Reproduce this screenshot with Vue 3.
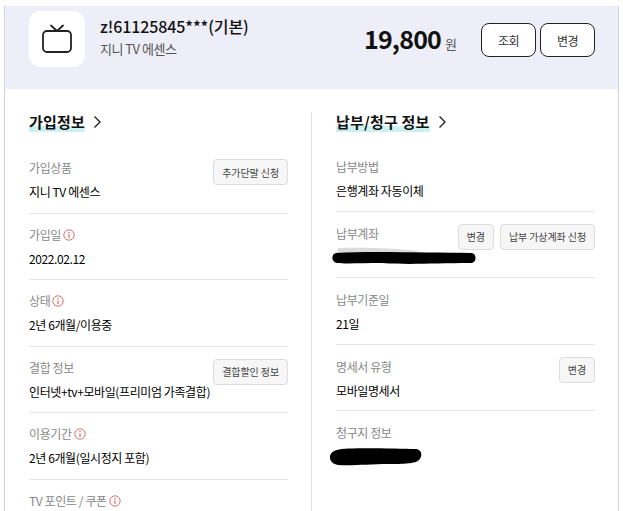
<script setup>
const joinRows = [
  { label: '가입상품', value: '지니 TV 에센스', buttons: ['추가단말 신청'] },
  { label: '가입일', info: true, value: '2022.02.12' },
  { label: '상태', info: true, value: '2년 6개월/이용중' },
  { label: '결합 정보', value: '인터넷+tv+모바일(프리미엄 가족결합)', buttons: ['결합할인 정보'] },
  { label: '이용기간', info: true, value: '2년 6개월(일시정지 포함)' },
  { label: 'TV 포인트 / 쿠폰', info: true, value: '' }
]

const payRows = [
  { label: '납부방법', value: '은행계좌 자동이체' },
  { label: '납부계좌', blob: 'account', buttons: ['변경', '납부 가상계좌 신청'] },
  { label: '납부기준일', value: '21일' },
  { label: '명세서 유형', value: '모바일명세서', buttons: ['변경'] },
  { label: '청구지 정보', blob: 'address' }
]
</script>

<template>
  <div class="page">
    <div class="card">
      <!-- 상단 요약 -->
      <header class="summary">
        <div class="icon-box">
          <svg width="32" height="30" viewBox="0 0 32 30" fill="none" stroke="#222" stroke-width="1.800" stroke-linecap="round" stroke-linejoin="round">
            <rect x="2" y="7" width="28" height="21" rx="4" />
            <path d="M10 1.500l6 5.500 6-5.500" />
          </svg>
        </div>
        <div class="summary-text">
          <div class="line-id">z!61125845***(기본)</div>
          <div class="line-name">지니 TV 에센스</div>
        </div>
        <div class="price"><strong>19,800</strong><span>원</span></div>
        <div class="summary-buttons">
          <button class="btn-round">조회</button>
          <button class="btn-round">변경</button>
        </div>
      </header>

      <div class="columns">
        <!-- 가입정보 -->
        <section class="col col-left">
          <h2 class="col-title">
            <span>가입정보</span>
            <svg width="9" height="14" viewBox="0 0 9 14" fill="none" stroke="#222" stroke-width="1.4"><path d="M1.5 1.5L7 7l-5.500 5.500" /></svg>
          </h2>
          <div v-for="row in joinRows" :key="row.label" class="row">
            <div class="row-text">
              <div class="label">
                {{ row.label }}
                <svg v-if="row.info" class="info" width="12" height="12" viewBox="0 0 12 12" fill="none" stroke="#e0706c">
                  <circle cx="6" cy="6" r="5.200" />
                  <path d="M6 5.200V9M6 3v1.200" stroke-width="1.200" />
                </svg>
              </div>
              <div class="value">{{ row.value }}</div>
            </div>
            <div v-if="row.buttons" class="row-buttons">
              <button v-for="b in row.buttons" :key="b" class="btn-small">{{ b }}</button>
            </div>
          </div>
        </section>

        <!-- 납부/청구 정보 -->
        <section class="col col-right">
          <h2 class="col-title">
            <span>납부/청구 정보</span>
            <svg width="9" height="14" viewBox="0 0 9 14" fill="none" stroke="#222" stroke-width="1.4"><path d="M1.5 1.5L7 7l-5.500 5.500" /></svg>
          </h2>
          <div v-for="row in payRows" :key="row.label" class="row">
            <div class="row-text">
              <div class="label">{{ row.label }}</div>
              <div class="value">
                {{ row.value }}
                <svg v-if="row.blob === 'account'" class="blob blob-account" width="144" height="18" viewBox="0 0 144 18">
                  <path d="M6 1C30 0 60 1 90 4L70 6H5z" fill="#888" opacity="0.3" />
                  <path d="M4 6C40 4 100 6 139 6c6 0 6 10 0 10C100 16 80 18 50 16 30 16 14 17 5 16-1 15-1 7 4 6z" fill="#000" />
                </svg>
                <svg v-if="row.blob === 'address'" class="blob blob-address" width="94" height="18" viewBox="0 0 94 18">
                  <path d="M9 2C20-1 70 1 87 1c7 0 8 7 4 11-3 3-10 4-30 4C40 16 25 18 10 17 1 16-2 5 9 2z" fill="#000" />
                </svg>
              </div>
            </div>
            <div v-if="row.buttons" class="row-buttons">
              <button v-for="b in row.buttons" :key="b" class="btn-small">{{ b }}</button>
            </div>
          </div>
        </section>
      </div>
    </div>
  </div>
</template>

<style>
html, body {
  margin: 0;
  height: 100%;
  overflow: hidden;
  background: #fff;
}
</style>

<style scoped>
.page {
  height: 511px;
  overflow: hidden;
  padding: 6px 4px 0 4px;
  box-sizing: border-box;
  font-family: "Noto Sans CJK KR", "Noto Sans", sans-serif;
  color: #111;
}

.card {
  border-left: 1px solid #d4d4d4;
  border-right: 1px solid #d4d4d4;
  height: 505px;
  box-sizing: border-box;
}

.summary {
  height: 83px;
  background: #eeeef8;
  display: flex;
  align-items: flex-start;
  padding: 5px 23px 0 24px;
  box-sizing: border-box;
}

.icon-box {
  width: 56px;
  height: 56px;
  background: #fff;
  border-radius: 12px;
  display: flex;
  align-items: center;
  justify-content: center;
}

.summary-text {
  margin-left: 15px;
  padding-top: 4px;
  flex: 1;
}

.line-id {
  font-size: 16px;
  font-weight: 500;
  line-height: 22px;
  letter-spacing: -0.1px;
  color: #111;
}

.line-name {
  font-size: 13px;
  line-height: 18px;
  margin-top: 3px;
  color: #555;
  letter-spacing: -0.5px;
}

.price {
  display: flex;
  align-items: baseline;
  margin-top: 10px;
  margin-right: 24px;
}

.price strong {
  font-size: 25px;
  font-weight: 700;
  line-height: 34px;
  color: #111;
  letter-spacing: -0.8px;
}

.price span {
  font-size: 13px;
  margin-left: 4px;
  color: #555;
}

.summary-buttons {
  display: flex;
  gap: 4px;
  margin-top: 12px;
}

.btn-round {
  width: 55px;
  height: 34px;
  padding: 0;
  border: 1px solid #222;
  border-radius: 8px;
  background: #fff;
  font: 12px "Noto Sans CJK KR", sans-serif;
  letter-spacing: -0.5px;
  color: #333;
}

.columns {
  display: flex;
  padding-top: 23px;
}

.col {
  flex: 1 1 0;
  box-sizing: border-box;
}

.col-left {
  padding: 0 23px 0 24px;
  width: 307px;
  flex: none;
  border-right: 1px solid #e2e2e2;
}

.col-right {
  padding: 0 23px 0 24px;
}

.col-title {
  margin: 0 0 15px;
  display: flex;
  align-items: center;
  gap: 8px;
  height: 20px;
  font-size: 15px;
  font-weight: 700;
  letter-spacing: 0.2px;
  color: #111;
}

.col-right .col-title {
  margin-bottom: 13px;
}

.col-title span {
  background: linear-gradient(transparent 70%, #cdf1f3 70%);
  line-height: 20px;
}

.row {
  display: flex;
  justify-content: space-between;
  height: 66.5px;
  box-sizing: border-box;
  border-bottom: 1px solid #e6e6e6;
  padding-top: 12px;
}

.col-right .row {
  padding-top: 13px;
}

.row:last-child {
  border-bottom: none;
}

.row-text {
  min-width: 0;
}

.label {
  display: flex;
  align-items: center;
  gap: 2px;
  font-size: 12px;
  line-height: 18px;
  letter-spacing: -0.4px;
  color: #888;
}

.value {
  position: relative;
  font-size: 12px;
  line-height: 18px;
  margin-top: 6px;
  letter-spacing: -0.4px;
  color: #000;
  white-space: nowrap;
  min-height: 18px;
}

.info {
  flex: none;
}

.row-buttons {
  display: flex;
  gap: 6px;
}

.col-right .row-buttons {
  margin-top: -1px;
}

.btn-small {
  height: 26px;
  padding: 0 8px;
  border: 1px solid #ddd;
  border-radius: 4px;
  background: #f6f6f6;
  font: 10px "Noto Sans CJK KR", sans-serif;
  letter-spacing: -0.1px;
  color: #444;
  white-space: nowrap;
}

.blob {
  position: absolute;
  display: block;
}

.blob-account {
  left: -4px;
  top: -2px;
}

.blob-address {
  left: -8px;
  top: 0;
}
</style>
